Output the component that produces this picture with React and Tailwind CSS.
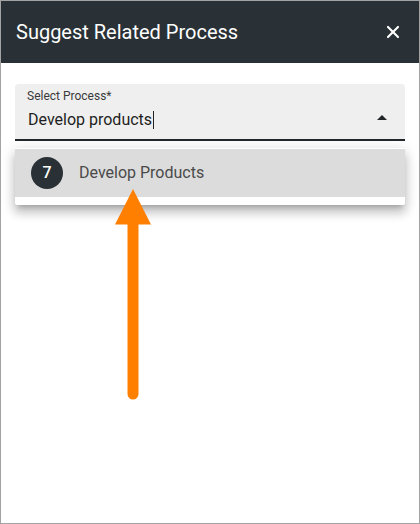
import { X } from "lucide-react";

const font = { fontFamily: "Roboto, 'Liberation Sans', sans-serif" };

const App = () => {
  return (
    <div
      className="relative w-[420px] h-[524px] border border-[#a3a3a3] bg-white overflow-hidden"
      style={font}
    >
      {/* Header */}
      <div className="h-[62px] bg-[#293136] flex items-center justify-between pl-[15px] pr-[16px]">
        <h1 className="text-[20px] font-normal text-white">Suggest Related Process</h1>
        <X className="text-white" size={20} strokeWidth={2.6} />
      </div>

      {/* Body */}
      <div className="px-[14px] pt-[21px]">
        <div className="relative bg-[#efefef] rounded-t-[4px] border-b-2 border-[#222629] pl-[12px] pr-[18px] pt-[4px] pb-[7px]">
          <div className="text-[12px] leading-[16px] text-[#3a3a3a]">Select Process*</div>
          <div className="mt-[4px] flex items-center justify-between">
            <div className="flex items-center text-[16px] leading-[24px] text-[#1e1e1e]">
              <span className="pl-px">Develop products</span>
              <span className="inline-block w-px h-[18px] bg-[#222] ml-px" />
            </div>
            <span className="w-0 h-0 border-l-[5px] border-r-[5px] border-b-[5px] border-l-transparent border-r-transparent border-b-[#222629] mt-[-6px]" />
          </div>
        </div>

        {/* Dropdown menu */}
        <div className="mt-[7px] bg-white pt-px pb-[8px] rounded-[2px] shadow-[0_5px_5px_-3px_rgba(0,0,0,0.2),0_8px_10px_1px_rgba(0,0,0,0.14),0_3px_14px_2px_rgba(0,0,0,0.12)]">
          <div className="h-[48px] bg-[#dcdcdc] flex items-center pl-[16px]">
            <span className="w-[32px] h-[32px] rounded-full bg-[#293136] text-white text-[16px] font-medium flex items-center justify-center">
              7
            </span>
            <span className="ml-[16px] text-[16px] text-[#4a4a4a]">Develop Products</span>
          </div>
        </div>
      </div>

      {/* Annotation arrow */}
      <svg
        className="absolute left-[112px] top-[186px]"
        width="40"
        height="216"
        viewBox="112 186 40 216"
      >
        <polygon points="132,188 114,223.5 150,223.5" fill="#ff8000" />
        <line x1="132" y1="220" x2="132" y2="393" stroke="#ff8000" strokeWidth="11" strokeLinecap="round" />
      </svg>
    </div>
  );
};

export default App;
